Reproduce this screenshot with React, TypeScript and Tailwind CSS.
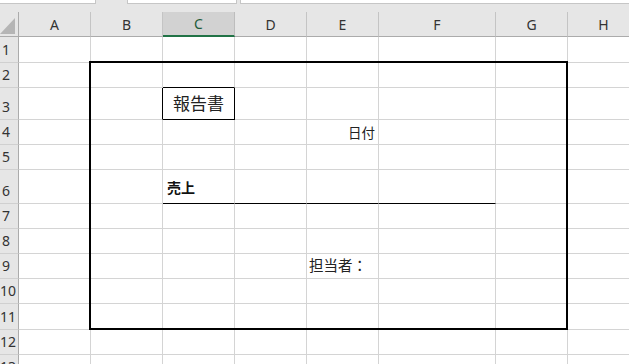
import React from 'react';

const cols = ['A', 'B', 'C', 'D', 'E', 'F', 'G', 'H'];
const rows = [1, 2, 3, 4, 5, 6, 7, 8, 9, 10, 11, 12, 13];

const gridTemplate =
  'grid grid-cols-[19px_72px_72px_72px_72px_72px_117px_72px_72px] grid-rows-[25px_26px_25px_32px_25px_25px_34px_25px_25px_25px_25px_26px_25px_25px]';

// cells whose gridline is drawn black
const blackRight = ['B3', 'C3'];
const blackBottom = ['C2', 'C3', 'C6', 'D6', 'E6', 'F6'];

const cellContent = (key: string) => {
  switch (key) {
    case 'C3':
      return (
        <div className="flex h-full items-center justify-center text-[17px] text-[#222]">報告書</div>
      );
    case 'E4':
      return (
        <div className="flex h-full items-center justify-end pr-[3px] pt-[2px] text-[13.5px] text-[#222]">日付</div>
      );
    case 'C6':
      return (
        <div className="flex h-full items-end pb-[5px] pl-[4px] text-[14px] font-bold text-[#111] whitespace-nowrap">売上</div>
      );
    case 'E9':
      return (
        <div className="flex h-full items-center pl-[2px] text-[14.5px] text-[#222] whitespace-nowrap">担当者：</div>
      );
    default:
      return null;
  }
};

const Cell: React.FC<{ col: string; row: number }> = ({ col, row }) => {
  const key = `${col}${row}`;
  const r = blackRight.includes(key) ? 'border-r-black' : 'border-r-[#d4d4d4]';
  const b = blackBottom.includes(key) ? 'border-b-black' : 'border-b-[#d4d4d4]';
  return <div className={`border-r border-b ${r} ${b} bg-white`}>{cellContent(key)}</div>;
};

const App: React.FC = () => {
  return (
    <div className="w-[629px] h-[364px] overflow-hidden bg-white font-['Noto_Sans','Noto_Sans_CJK_JP',sans-serif]">
      {/* ribbon remnants at the very top */}
      <div className="flex h-[12px] bg-[#e6e6e6]">
        <div className="h-[4px] w-[96px] bg-white border-b border-r border-[#c6c6c6]" />
        <div className="ml-[31px] h-[4px] w-[110px] bg-white border-b border-x border-[#c6c6c6]" />
        <div className="ml-[3px] h-[4px] flex-1 bg-white border-b border-l border-[#c6c6c6]" />
      </div>

      <div className="grid">
        {/* sheet */}
        <div className={`${gridTemplate} col-start-1 row-start-1`}>
          {/* corner */}
          <div className="flex items-end justify-end bg-[#e6e6e6] border-r border-b border-[#ababab] pb-[2px] pr-[3px]">
            <svg width="15" height="16" viewBox="0 0 15 16">
              <polygon points="15,0 15,16 0,16" fill="#b5b5b5" />
            </svg>
          </div>
          {cols.map((c) => (
            <div
              key={c}
              className={
                c === 'C'
                  ? 'flex items-center justify-center bg-[#d2d2d2] border-r border-r-[#bdbdbd] border-b-2 border-b-[#217346] text-[14px] text-[#1e5c3a]'
                  : 'flex items-center justify-center bg-[#e6e6e6] border-r border-r-[#c4c4c4] border-b border-b-[#ababab] text-[14px] text-[#333]'
              }
            >
              {c}
            </div>
          ))}

          {rows.map((r) => (
            <React.Fragment key={r}>
              <div className="flex items-end bg-[#e6e6e6] border-r border-b border-r-[#ababab] border-b-[#d0d0d0] pb-[2px]">
                <div className="w-[12px] text-center text-[14px] leading-[20px] text-[#333]">{r}</div>
              </div>
              {cols.map((c) => (
                <Cell key={c} col={c} row={r} />
              ))}
            </React.Fragment>
          ))}
        </div>

        {/* thick outline B2:G11 */}
        <div className={`${gridTemplate} col-start-1 row-start-1 pointer-events-none`}>
          <div className="col-start-3 col-end-9 row-start-3 row-end-13 -ml-[2px] -mt-[2px] border-2 border-black" />
        </div>
      </div>
    </div>
  );
};

export default App;
